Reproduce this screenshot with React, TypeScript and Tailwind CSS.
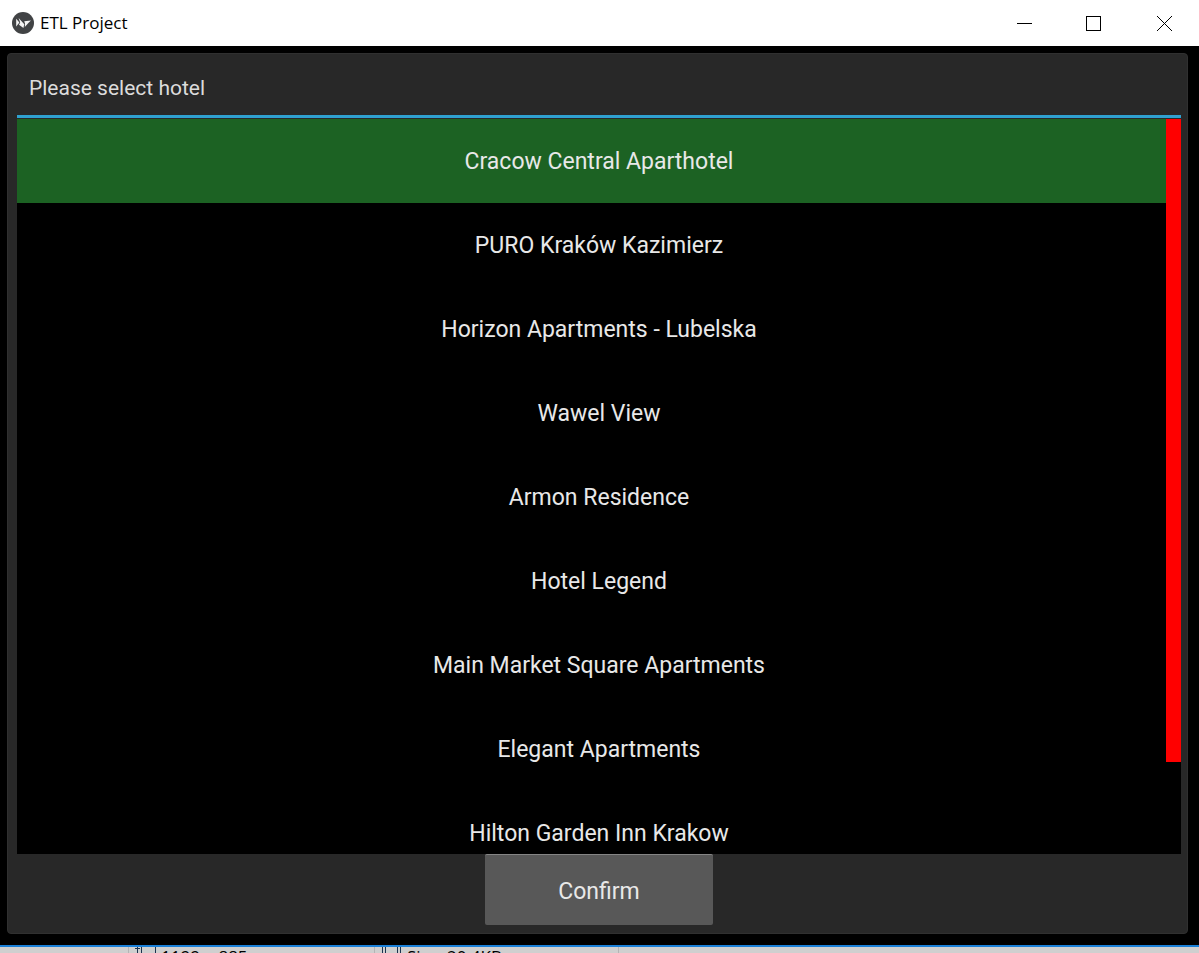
import { useState } from "react";

const hotels = [
  "Cracow Central Aparthotel",
  "PURO Kraków Kazimierz",
  "Horizon Apartments - Lubelska",
  "Wawel View",
  "Armon Residence",
  "Hotel Legend",
  "Main Market Square Apartments",
  "Elegant Apartments",
  "Hilton Garden Inn Krakow",
];

function AppLogo() {
  return (
    <svg viewBox="0 0 22 22" className="size-[22px]" aria-hidden="true">
      <circle cx="11" cy="11" r="11" fill="#414345" />
      <path d="M4.2 6.8 L7.4 10.4 L4.2 14.6 Z" fill="#f4f4f4" />
      <path d="M6.6 6 L12.3 12.2 L11.4 16 L7 12.8 L8.2 10.4 Z" fill="#f4f4f4" />
      <path d="M12.2 9.2 L19 8.6 L16.6 10.8 L12.8 15 L13 11.6 Z" fill="#f4f4f4" />
    </svg>
  );
}

function TitleBar() {
  return (
    <header className="flex h-[46px] shrink-0 items-center bg-white pl-3 text-black">
      <AppLogo />
      <h1 className="ml-1.5 grow font-['Open_Sans',sans-serif] text-[17px] leading-6">ETL Project</h1>
      <button type="button" aria-label="Minimize" className="flex h-full w-[67px] items-center justify-center">
        <svg width="15" height="15" viewBox="0 0 15 15" shapeRendering="crispEdges">
          <path d="M0 7.5H15" stroke="#000" />
        </svg>
      </button>
      <button type="button" aria-label="Maximize" className="flex h-full w-[71px] items-center justify-center">
        <svg width="15" height="15" viewBox="0 0 15 15" shapeRendering="crispEdges">
          <path d="M.5 .5H14.5V14.5H.5Z" fill="none" stroke="#000" />
        </svg>
      </button>
      <button type="button" aria-label="Close" className="flex h-full w-[70px] items-center justify-center">
        <svg width="15" height="15" viewBox="0 0 15 15">
          <path d="M0 0L15 15M15 0L0 15" stroke="#000" />
        </svg>
      </button>
    </header>
  );
}

function StatusStrip() {
  return (
    <footer className="flex h-1.5 shrink-0 overflow-hidden bg-[#cfcfcf] pl-[128px] font-['Open_Sans',sans-serif] text-[17px] leading-5 text-black">
      <div className="flex w-[246px] border-l border-[#b4b4b4] pl-1">
        <svg width="24" height="6" viewBox="0 0 24 6" className="shrink-0" aria-hidden="true">
          <path d="M2 1.5H7M4.5 0V6M8.5 0V6M22.5 0V6" stroke="#1b3350" />
        </svg>
        <span className="ml-1">1199 × 885px</span>
      </div>
      <div className="flex w-[245px] border-x border-[#b4b4b4] pl-1">
        <svg width="24" height="6" viewBox="0 0 24 6" className="shrink-0" aria-hidden="true">
          <path d="M3.5 0V6M6.5 0V6M18.5 0V6M21.5 0V6" stroke="#1b3350" />
        </svg>
        <span className="ml-1">Size: 20,4KB</span>
      </div>
    </footer>
  );
}

export default function App() {
  const [selected, setSelected] = useState(0);

  return (
    <div className="flex h-screen min-h-96 flex-col bg-black font-[Roboto,sans-serif] text-[#e8e8e8]">
      <TitleBar />
      <main className="flex min-h-0 grow flex-col border-b-2 border-[#1a80d8] pt-[7px] pr-[11px] pb-[11px] pl-[7px]">
        <section className="flex min-h-0 grow flex-col rounded-sm border border-[#303030] bg-[#282828] pr-1.5 pb-2 pl-[9px]">
          <h2 className="px-3 pt-[22px] pb-[15px] text-[21px] leading-6 text-[#dcdcdc]">Please select hotel</h2>
          <div className="h-[3px] shrink-0 bg-[#2fa1d0]" />
          <div className="relative mt-px min-h-0 grow overflow-hidden bg-black">
            <ul>
              {hotels.map((hotel, index) => (
                <li key={hotel}>
                  <button
                    type="button"
                    aria-pressed={index === selected}
                    onClick={() => setSelected(index)}
                    className={
                      index === selected
                        ? "block h-[84px] w-full bg-[#1c6223] pt-0.5 text-[23px] leading-7"
                        : "block h-[84px] w-full bg-black pt-0.5 text-[23px] leading-7"
                    }
                  >
                    {hotel}
                  </button>
                </li>
              ))}
            </ul>
            <div className="absolute top-0 right-0 h-7/8 w-[15px] bg-[#ff0000]" />
          </div>
          <button
            type="button"
            className="h-[71px] w-[228px] shrink-0 self-center rounded-xs border-t border-[#858585] bg-[#585858] pt-1 text-[23px] leading-7"
          >
            Confirm
          </button>
        </section>
      </main>
      <StatusStrip />
    </div>
  );
}
